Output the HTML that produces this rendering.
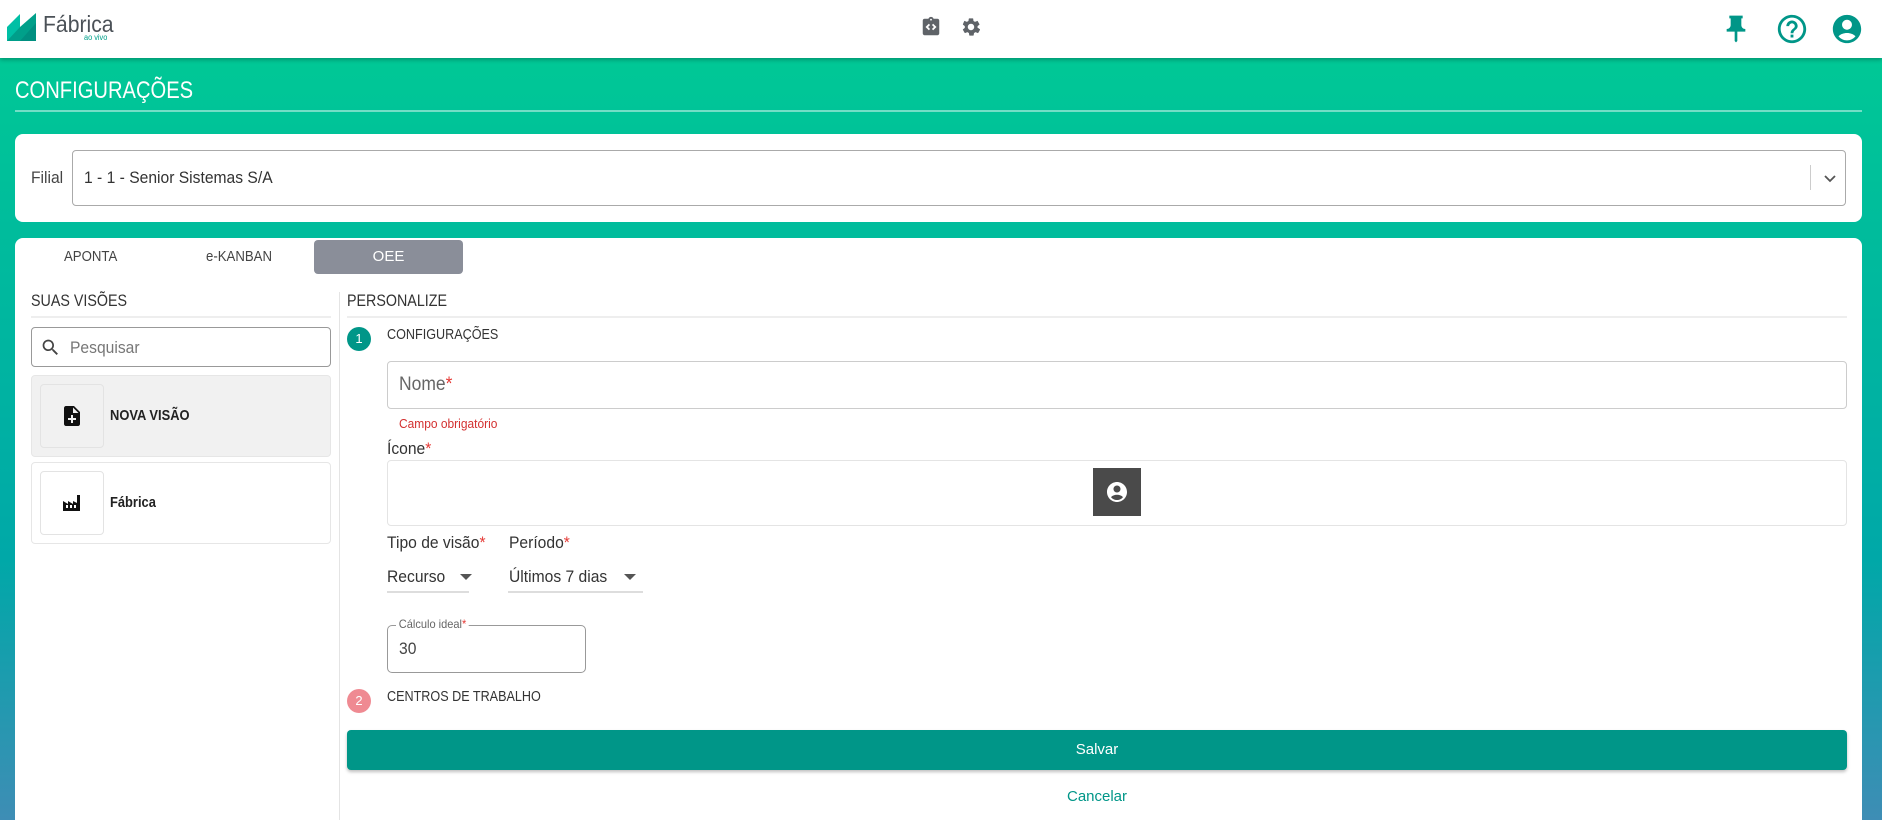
<!DOCTYPE html>
<html style="width:1882px;height:820px;overflow:hidden"><head><meta charset="utf-8">
<style>
*{box-sizing:border-box;margin:0;padding:0}
html{background:#3e8db5}
body{width:1882px;height:820px;overflow:hidden;font-family:"Liberation Sans",sans-serif;background:linear-gradient(180deg,#00c896 58px,#00bc9c 230px,#00a8a8 560px,#3e8db5 820px);position:relative;color:#333}
.abs{position:absolute}
header{position:absolute;left:0;top:0;width:1882px;height:58px;background:#fff;box-shadow:0 2px 4px rgba(0,0,0,.25)}
.card{position:absolute;background:#fff;border-radius:8px}
.t{position:absolute;white-space:nowrap;transform-origin:left center;transform:scaleX(.92)}
.u{transform:scaleX(.84)}
.red{color:#e53935}
</style></head><body>
<header>
<svg class="abs" style="left:7px;top:13px" width="30" height="29" viewBox="0 0 30 29"><polygon points="0,14 13,1 13,28 0,28" fill="#00bfa5"/><polygon points="13,14 29,0 29,28 13,28" fill="#00a08a"/><polygon points="0,28 13,14 13,28" fill="#009e8a"/><polygon points="13,28 29,10 29,28" fill="#008f80"/></svg>
<div class="t" style="left:43px;top:11px;font-size:23px;color:#4b5157">Fábrica</div>
<div class="t" style="left:84px;top:33px;font-size:8px;color:#00a08a">ao vivo</div>
<svg class="abs" style="left:920px;top:16px" width="22" height="22" viewBox="0 0 24 24"><path fill="#5f6368" d="M19 3h-4.2C14.4 1.8 13.3 1 12 1s-2.4.8-2.8 2H5c-1.1 0-2 .9-2 2v14c0 1.1.9 2 2 2h14c1.1 0 2-.9 2-2V5c0-1.1-.9-2-2-2zm-7 0c.6 0 1 .4 1 1s-.4 1-1 1-1-.4-1-1 .4-1 1-1zM11 14.2 9.6 15.6 6 12l3.6-3.6L11 9.8 8.8 12 11 14.2zm3.4 1.4L13 14.2 15.2 12 13 9.8l1.4-1.4L18 12l-3.6 3.6z"/></svg>
<svg class="abs" style="left:960px;top:16px" width="22" height="22" viewBox="0 0 24 24"><path fill="#5f6368" d="M19.1 12.9c0-.3.1-.6.1-.9s0-.6-.1-.9l2-1.6c.2-.1.2-.4.1-.6l-1.9-3.3c-.1-.2-.4-.3-.6-.2l-2.4 1c-.5-.4-1-.7-1.6-.9L14.4 3c0-.2-.2-.4-.5-.4h-3.8c-.2 0-.4.2-.5.4l-.4 2.5c-.6.2-1.1.6-1.6.9l-2.4-1c-.2-.1-.5 0-.6.2L3.200 8.9c-.1.2-.1.5.1.6l2 1.6c0 .3-.1.6-.1.9s0 .6.1.9l-2 1.6c-.2.1-.2.4-.1.6l1.9 3.3c.1.2.4.3.6.2l2.4-1c.5.4 1 .7 1.6.9l.4 2.5c0 .2.2.4.5.4h3.8c.2 0 .4-.2.5-.4l.4-2.5c.6-.2 1.1-.6 1.6-.9l2.4 1c.2.1.5 0 .6-.2l1.9-3.3c.1-.2.1-.5-.1-.6l-2.1-1.6zM12 15.5c-1.9 0-3.5-1.6-3.5-3.5s1.6-3.5 3.5-3.5 3.5 1.6 3.5 3.5-1.6 3.5-3.5 3.5z"/></svg>
<svg class="abs" style="left:1720px;top:13px" width="32" height="32" viewBox="0 0 24 24"><path fill="#009688" d="M16 9V4h1V2H7v2h1v5c0 1.7-1.3 3-3 3v2h6v7l1 1 1-1v-7h6v-2c-1.7 0-3-1.3-3-3z"/></svg>
<svg class="abs" style="left:1775px;top:12px" width="34" height="34" viewBox="0 0 24 24"><path fill="#009688" d="M11 18h2v-2h-2v2zm1-16C6.500 2 2 6.5 2 12s4.5 10 10 10 10-4.5 10-10S17.5 2 12 2zm0 18c-4.4 0-8-3.6-8-8s3.6-8 8-8 8 3.6 8 8-3.6 8-8 8zm0-14c-2.2 0-4 1.8-4 4h2c0-1.1.9-2 2-2s2 .9 2 2c0 2-3 1.8-3 5h2c0-2.3 3-2.5 3-5 0-2.2-1.8-4-4-4z"/></svg>
<svg class="abs" style="left:1830px;top:12px" width="34" height="34" viewBox="0 0 24 24"><path fill="#009688" d="M12 2C6.5 2 2 6.5 2 12s4.5 10 10 10 10-4.5 10-10S17.5 2 12 2zm0 3.5c1.9 0 3.5 1.6 3.5 3.5S13.9 12.5 12 12.5 8.5 10.9 8.5 9 10.1 5.5 12 5.5zM12 20c-2.4 0-4.6-1.1-6-2.9 1.5-1.5 3.6-2.3 6-2.3s4.5.8 6 2.3c-1.4 1.8-3.6 2.9-6 2.9z"/></svg>
</header>

<div class="t u" style="left:15px;top:77px;font-size:24px;color:#fff">CONFIGURAÇÕES</div>
<div class="abs" style="left:15px;top:110px;width:1847px;height:2px;background:rgba(255,255,255,.45)"></div>

<div class="card" style="left:15px;top:134px;width:1847px;height:88px">
  <div class="t" style="left:16px;top:34px;font-size:17px;color:#444">Filial</div>
  <div class="abs" style="left:57px;top:16px;width:1774px;height:56px;border:1px solid #aaa;border-radius:4px">
    <div class="t" style="left:11px;top:17px;font-size:17px;color:#333">1 - 1 - Senior Sistemas S/A</div>
    <div class="abs" style="left:1737px;top:14px;width:1px;height:25px;background:#ccc"></div>
    <svg class="abs" style="left:1750px;top:20px" width="14" height="14" viewBox="0 0 14 14"><path d="M2 5l5 5 5-5" stroke="#555" stroke-width="1.8" fill="none"/></svg>
  </div>
</div>

<div class="card" style="left:15px;top:238px;width:1847px;height:600px;border-bottom-left-radius:0;border-bottom-right-radius:0">
  <div class="t u" style="left:49px;top:10px;font-size:15px;color:#444;transform:scaleX(.88)">APONTA</div>
  <div class="t u" style="left:191px;top:10px;font-size:15px;color:#444;transform:scaleX(.88)">e-KANBAN</div>
  <div class="abs" style="left:299px;top:2px;width:149px;height:34px;background:#8a8e99;border-radius:4px;color:#fff;font-size:15px;text-align:center;line-height:34px">OEE</div>

  <div class="t u" style="left:16px;top:53px;font-size:17px;color:#333">SUAS VISÕES</div>
  <div class="abs" style="left:16px;top:78px;width:300px;height:2px;background:#eee"></div>
  <div class="abs" style="left:16px;top:89px;width:300px;height:40px;border:1px solid #999;border-radius:4px">
    <svg class="abs" style="left:8px;top:9px" width="21" height="21" viewBox="0 0 24 24"><path fill="#444" d="M15.5 14h-.8l-.3-.3c1-1.1 1.6-2.6 1.6-4.2C16 5.9 13.1 3 9.5 3S3 5.9 3 9.5 5.9 16 9.5 16c1.6 0 3.1-.6 4.2-1.6l.3.3v.8l5 5 1.5-1.5-5-5zm-6 0C7 14 5 12 5 9.5S7 5 9.5 5 14 7 14 9.5 12 14 9.5 14z"/></svg>
    <div class="t" style="left:38px;top:10px;font-size:17px;color:#777">Pesquisar</div>
  </div>
  <div class="abs" style="left:16px;top:137px;width:300px;height:82px;background:#f1f1f1;border:1px solid #e6e6e6;border-radius:4px">
    <div class="abs" style="left:8px;top:8px;width:64px;height:64px;border:1px solid #e3e3e3;border-radius:4px;background:#f1f1f1"></div>
    <svg class="abs" style="left:28px;top:28px" width="24" height="24" viewBox="0 0 24 24"><path fill="#111" d="M14 2H6c-1.1 0-2 .9-2 2v16c0 1.1.9 2 2 2h12c1.1 0 2-.9 2-2V8l-6-6zm2 14h-3v3h-2v-3H8v-2h3v-3h2v3h3v2zm-3-7V3.5L18.5 9H13z"/></svg>
    <div class="t" style="left:78px;top:31px;font-size:15px;color:#222;font-weight:bold;transform:scaleX(.86)">NOVA VISÃO</div>
  </div>
  <div class="abs" style="left:16px;top:224px;width:300px;height:82px;border:1px solid #e6e6e6;border-radius:4px">
    <div class="abs" style="left:8px;top:8px;width:64px;height:64px;border:1px solid #e3e3e3;border-radius:4px"></div>
    <svg class="abs" style="left:29px;top:28px" width="22" height="22" viewBox="0 0 22 22"><path fill="#111" d="M2 20V10l5 3V10l5 3V10l4 2V4h3v16H2z"/><rect x="5" y="14" width="2" height="3" fill="#fff"/><rect x="9" y="14" width="2" height="3" fill="#fff"/><rect x="13" y="14" width="2" height="3" fill="#fff"/></svg>
    <div class="t" style="left:78px;top:31px;font-size:15px;color:#222;font-weight:bold;transform:scaleX(.86)">Fábrica</div>
  </div>

  <div class="abs" style="left:324px;top:54px;width:1px;height:546px;background:#e4e4e4"></div>

  <div class="t u" style="left:332px;top:53px;font-size:17px;color:#333">PERSONALIZE</div>
  <div class="abs" style="left:332px;top:78px;width:1500px;height:2px;background:#eee"></div>
  <div class="abs" style="left:332px;top:89px;width:24px;height:24px;border-radius:50%;background:#009688;color:#fff;font-size:13px;text-align:center;line-height:24px">1</div>
  <div class="t u" style="left:372px;top:88px;font-size:15px;color:#333">CONFIGURAÇÕES</div>
  <div class="abs" style="left:372px;top:123px;width:1460px;height:48px;border:1px solid #ccc;border-radius:4px">
    <div class="t" style="left:11px;top:12px;font-size:19px;color:#666">Nome<span class="red">*</span></div>
  </div>
  <div class="t" style="left:384px;top:178px;font-size:13px;color:#d32f2f">Campo obrigatório</div>
  <div class="t" style="left:372px;top:201px;font-size:17px;color:#333">Ícone<span class="red">*</span></div>
  <div class="abs" style="left:372px;top:222px;width:1460px;height:66px;border:1px solid #e4e4e4;border-radius:4px">
    <div class="abs" style="left:705px;top:7px;width:48px;height:48px;background:#4a4a4a">
      <svg class="abs" style="left:12px;top:12px" width="24" height="24" viewBox="0 0 24 24"><path fill="#fff" d="M12 2C6.5 2 2 6.5 2 12s4.5 10 10 10 10-4.5 10-10S17.5 2 12 2zm0 3.5c1.9 0 3.5 1.6 3.5 3.5S13.9 12.5 12 12.5 8.5 10.9 8.5 9 10.1 5.5 12 5.5zM12 20c-2.4 0-4.6-1.1-6-2.9 1.5-1.5 3.6-2.3 6-2.3s4.5.8 6 2.3c-1.4 1.8-3.6 2.9-6 2.9z"/></svg>
    </div>
  </div>
  <div class="t" style="left:372px;top:295px;font-size:17px;color:#333">Tipo de visão<span class="red">*</span></div>
  <div class="t" style="left:494px;top:295px;font-size:17px;color:#333">Período<span class="red">*</span></div>
  <div class="t" style="left:372px;top:329px;font-size:17px;color:#333">Recurso</div>
  <svg class="abs" style="left:445px;top:335px" width="12" height="8"><path d="M0 1h12L6 7z" fill="#555"/></svg>
  <div class="abs" style="left:372px;top:353px;width:82px;height:2px;background:#ddd"></div>
  <div class="t" style="left:494px;top:329px;font-size:17px;color:#333">Últimos 7 dias</div>
  <svg class="abs" style="left:609px;top:335px" width="12" height="8"><path d="M0 1h12L6 7z" fill="#555"/></svg>
  <div class="abs" style="left:493px;top:353px;width:135px;height:2px;background:#ddd"></div>
  <div class="abs" style="left:372px;top:387px;width:199px;height:48px;border:1px solid #999;border-radius:5px">
    <div class="t" style="left:8px;top:-9px;font-size:12px;color:#666;background:#fff;padding:0 3px">Cálculo ideal<span class="red">*</span></div>
    <div class="t" style="left:11px;top:13px;font-size:17px;color:#444">30</div>
  </div>
  <div class="abs" style="left:332px;top:451px;width:24px;height:24px;border-radius:50%;background:#ef8a92;color:#fff;font-size:13px;text-align:center;line-height:24px">2</div>
  <div class="t u" style="left:372px;top:450px;font-size:15px;color:#333">CENTROS DE TRABALHO</div>
  <div class="abs" style="left:332px;top:492px;width:1500px;height:40px;background:#009688;border-radius:4px;box-shadow:0 2px 3px rgba(0,0,0,.25);color:#fff;font-size:15px;text-align:center;line-height:40px">Salvar</div>
  <div class="abs" style="left:332px;top:550px;width:1500px;text-align:center;font-size:15px;color:#009688">Cancelar</div>
</div>
</body></html>
